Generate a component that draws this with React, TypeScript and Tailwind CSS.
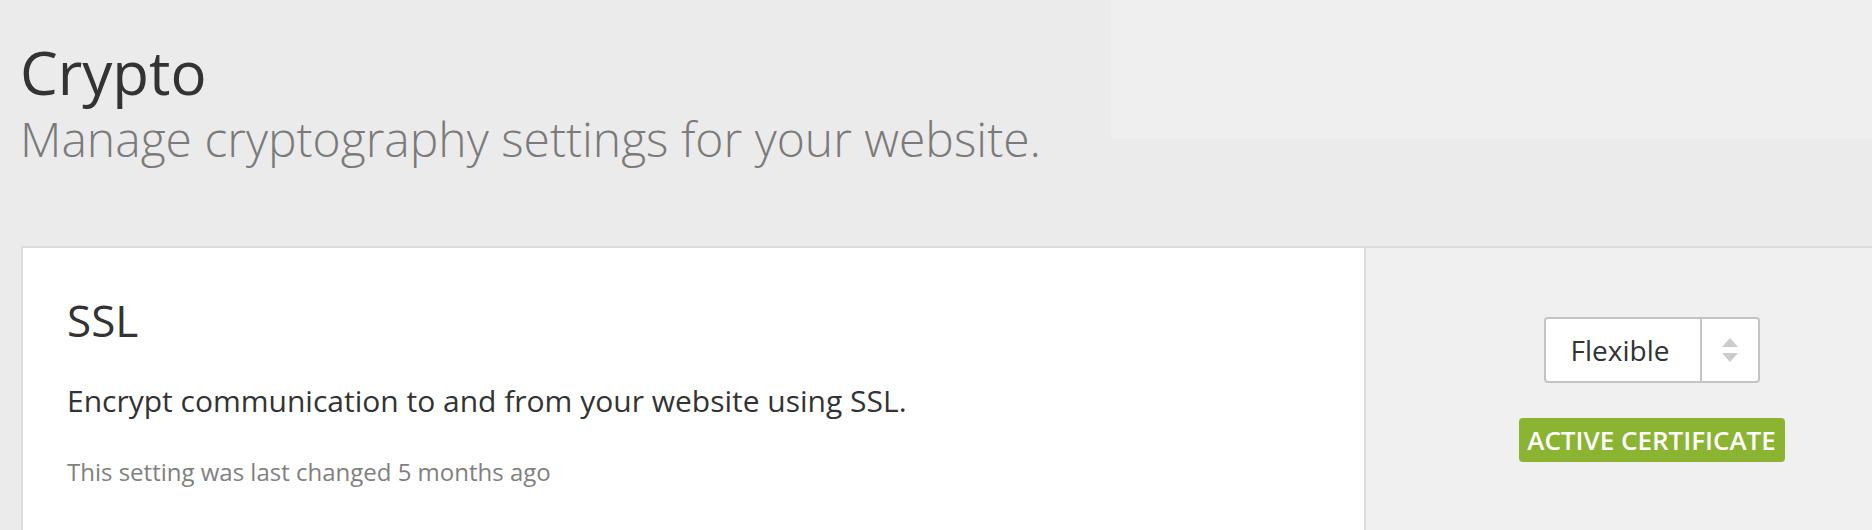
import React from "react";

export default function App() {
  return (
    <div
      className="w-full h-[530px] overflow-hidden bg-[#ebebeb] text-[#333]"
      style={{ fontFamily: '"Open Sans", "Noto Sans", sans-serif' }}
    >
      <div className="flex w-[1872px]">
        <div className="flex-1 pl-[20px] pt-[36px]">
          <h1 className="text-[60px] leading-[72px] font-normal text-[#333]">Crypto</h1>
          <p className="mt-[2px] text-[48px] leading-[58px] font-light text-[#7a7a7a]">
            Manage cryptography settings for your website.
          </p>
        </div>
        <div className="w-[761px] h-[139px] shrink-0 bg-[#efefef]" />
      </div>

      <div className="mt-[78px] ml-[21px] flex w-[1916px] h-[300px] border-t-2 border-l-2 border-[#dcdcdc]">
        <div className="w-[1341px] shrink-0 bg-white pl-[44px] pt-[46px]">
          <h2 className="text-[44px] leading-[52px] font-normal text-[#333]">SSL</h2>
          <p className="mt-[35px] text-[30px] leading-[40px] text-[#333]">
            Encrypt communication to and from your website using SSL.
          </p>
          <p className="mt-[36px] text-[24px] leading-[30px] text-[#808080]">
            This setting was last changed 5 months ago
          </p>
        </div>
        <div className="flex-1 bg-[#f0f0f0] border-l-2 border-[#dcdcdc] flex flex-col items-center pt-[69px]">
          <div className="flex w-[216px] h-[66px] bg-white border-2 border-[#c4c4c4] rounded-[4px]">
            <div className="w-[154px] pr-[5px] flex items-center justify-center text-[28px] text-[#333]">
              Flexible
            </div>
            <div className="flex-1 border-l-2 border-[#c4c4c4] flex flex-col items-center justify-center gap-[6px]">
              <svg width="16" height="9" viewBox="0 0 16 9">
                <polygon points="8,0 16,9 0,9" fill="#cccccc" />
              </svg>
              <svg width="16" height="9" viewBox="0 0 16 9">
                <polygon points="0,0 16,0 8,9" fill="#cccccc" />
              </svg>
            </div>
          </div>
          <div className="mt-[35px] w-[266px] h-[44px] rounded-[4px] bg-[#8ab432] flex items-center justify-center text-white text-[26px] font-semibold uppercase">
            Active Certificate
          </div>
        </div>
      </div>
    </div>
  );
}
